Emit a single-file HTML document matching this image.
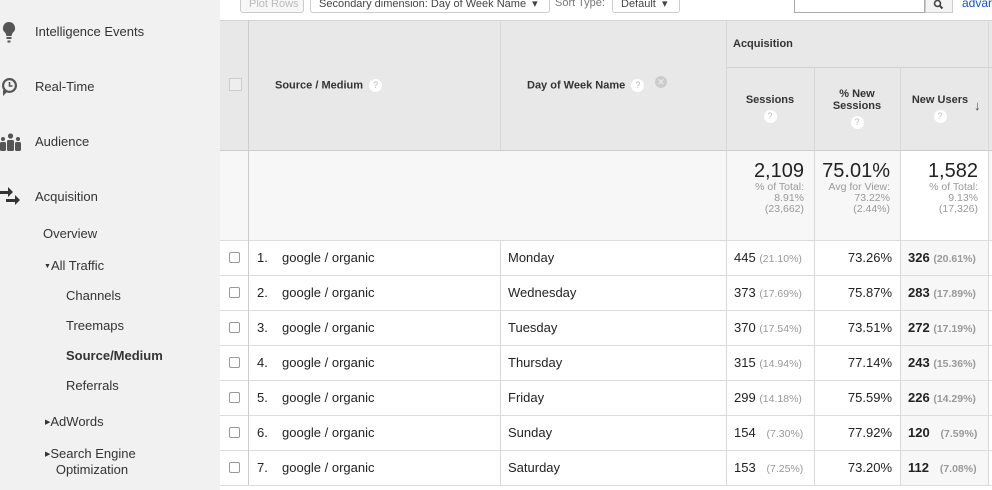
<!DOCTYPE html>
<html><head><style>
*{margin:0;padding:0;box-sizing:border-box}
body{width:992px;height:490px;overflow:hidden;background:#fff;font-family:"Liberation Sans",Arial,sans-serif;color:#222;position:relative}
.a{position:absolute}
.side{left:0;top:0;width:220px;height:490px;background:#f1f1f1}
.side div{position:absolute;font-size:13px;color:#333;white-space:nowrap}
.bt{border:1px solid #ccc;border-radius:3px;background:#f7f7f7;font-size:11px;color:#444;height:15px;top:-2px;padding:0 8px;line-height:10px;white-space:nowrap;overflow:hidden}
.vl{position:absolute;width:1px;background:#d8d8d8}
.hl{position:absolute;height:1px;background:#dcdcdc;left:220px;width:772px}
.t{position:absolute;font-size:13px;white-space:nowrap}
.cb{position:absolute;left:229px;width:11px;height:11px;border:1px solid #999;border-radius:2px;background:#fff}
.q{display:inline-block;width:13px;height:13px;border-radius:50%;background:#fff;color:#bbb;font-size:9px;text-align:center;line-height:13px;font-weight:normal;vertical-align:middle}
.th{position:absolute;font-size:11px;font-weight:bold;color:#333;text-align:center;white-space:nowrap}
.g{color:#999;font-size:10.5px}
.r{text-align:right}
</style></head><body>
<div class="a side">
 <svg class="a" style="left:2px;top:22px" width="14" height="22" viewBox="0 0 14 22"><path d="M7 0a6 6 0 0 0-4 10.5c1 1 1.3 2.5 1.3 3.5h5.4c0-1 .3-2.5 1.3-3.5A6 6 0 0 0 7 0z" fill="#555"/><rect x="4.5" y="15" width="5" height="2" fill="#555"/><rect x="5.5" y="18.5" width="3" height="2" fill="#555"/></svg>
 <svg class="a" style="left:0;top:77px" width="19" height="20" viewBox="0 0 19 20"><circle cx="9.5" cy="8.5" r="7.5" fill="#555"/><circle cx="9.5" cy="8.5" r="5.3" fill="#f1f1f1"/><path d="M9.5 5v4h3" stroke="#555" stroke-width="1.6" fill="none"/><path d="M3 13l0 6 4-4z" fill="#555"/></svg>
 <svg class="a" style="left:0;top:133px" width="21" height="18" viewBox="0 0 21 18"><circle cx="10.5" cy="3" r="2.6" fill="#555"/><circle cx="3" cy="6" r="2" fill="#555"/><circle cx="18" cy="6" r="2" fill="#555"/><rect x="7" y="7" width="7" height="11" rx="1.5" fill="#555"/><rect x="0" y="9" width="6" height="9" rx="1.5" fill="#555"/><rect x="15" y="9" width="6" height="9" rx="1.5" fill="#555"/></svg>
 <svg class="a" style="left:0;top:186px" width="21" height="22" viewBox="0 0 21 22"><path d="M0 5h8V1l5 5-5 5V8H0z" fill="#333"/><path d="M6 13h9v-4l5 5-5 5v-3H6z" fill="#333"/></svg>
 <div style="left:35px;top:24px">Intelligence Events</div>
 <div style="left:35px;top:79px">Real-Time</div>
 <div style="left:35px;top:134px">Audience</div>
 <div style="left:35px;top:189px">Acquisition</div>
 <div style="left:43px;top:226px">Overview</div>
 <div style="left:44px;top:258px"><span style="font-size:7px;vertical-align:2px">▼</span>All Traffic</div>
 <div style="left:66px;top:288px">Channels</div>
 <div style="left:66px;top:318px">Treemaps</div>
 <div style="left:66px;top:348px;font-weight:bold">Source/Medium</div>
 <div style="left:66px;top:378px">Referrals</div>
 <div style="left:45px;top:414px"><span style="font-size:7px;vertical-align:2px">▶</span>AdWords</div>
 <div style="left:45px;top:446px;line-height:15px"><span style="font-size:7px;vertical-align:2px">▶</span>Search Engine<br>&nbsp;&nbsp;&nbsp;Optimization</div>
</div>
<!-- toolbar -->
<div class="a bt" style="left:240px;width:64px;color:#bbb">Plot Rows</div>
<div class="a bt" style="left:310px;width:240px;background:#fff">Secondary dimension: Day of Week Name &nbsp;▾</div>
<div class="a" style="left:555px;top:-3px;font-size:11px;color:#777">Sort Type:</div>
<div class="a bt" style="left:612px;width:68px;background:#fff">Default &nbsp;▾</div>
<div class="a" style="left:794px;top:-2px;width:131px;height:15px;border:1px solid #aaa;background:#fff"></div>
<div class="a" style="left:925px;top:-2px;width:28px;height:15px;border:1px solid #ccc;background:#f3f3f3"></div>
<svg class="a" style="left:933px;top:0" width="12" height="10" viewBox="0 0 12 10"><circle cx="4.5" cy="3.5" r="3" stroke="#444" stroke-width="1.6" fill="none"/><path d="M6.5 5.5l3 3" stroke="#444" stroke-width="2"/></svg>
<div class="a" style="left:962px;top:-4px;font-size:12px;color:#15c">advar</div>
<!-- header bg -->
<div class="a" style="left:220px;top:20px;width:772px;height:130px;background:#e8e8e8;border-top:1px solid #d4d4d4"></div>
<div class="a" style="left:220px;top:150px;width:772px;height:90px;background:#f7f7f7"></div>
<div class="a" style="left:900px;top:150px;width:88px;height:90px;background:#fff"></div>
<div class="a" style="left:900px;top:240px;width:88px;height:245px;background:#f7f7f7"></div>
<!-- lines -->
<div class="hl" style="top:150px;background:#ccc"></div>
<div class="hl" style="top:240px"></div>
<div class="hl" style="top:275px"></div><div class="hl" style="top:310px"></div><div class="hl" style="top:345px"></div><div class="hl" style="top:380px"></div><div class="hl" style="top:415px"></div><div class="hl" style="top:450px"></div><div class="hl" style="top:485px"></div>
<div class="a" style="left:726px;top:67px;width:266px;height:1px;background:#d0d0d0"></div>
<div class="vl" style="left:248px;top:20px;height:465px;background:#ccc"></div>
<div class="vl" style="left:500px;top:20px;height:130px"></div>
<div class="vl" style="left:500px;top:240px;height:245px"></div>
<div class="vl" style="left:726px;top:20px;height:465px"></div>
<div class="vl" style="left:814px;top:67px;height:418px"></div>
<div class="vl" style="left:900px;top:67px;height:418px"></div>
<div class="vl" style="left:988px;top:20px;height:465px"></div>
<!-- header text -->
<div class="a" style="left:229px;top:78px;width:13px;height:13px;border:1px solid #ccc;background:#eee"></div>
<div class="th" style="left:275px;top:79px">Source / Medium &nbsp;<span class="q">?</span></div>
<div class="th" style="left:527px;top:79px">Day of Week Name &nbsp;<span class="q">?</span></div>
<div class="a" style="left:655px;top:76px;width:12px;height:12px;border-radius:50%;background:#ccc;color:#e8e8e8;font-size:9px;line-height:12px;text-align:center;font-weight:bold">✕</div>
<div class="th" style="left:733px;top:38px">Acquisition</div>
<div class="th" style="left:726px;top:94px;width:88px">Sessions<br><span class="q" style="margin-top:4px">?</span></div>
<div class="th" style="left:814px;top:88px;width:86px;line-height:12px">% New<br>Sessions<br><span class="q" style="margin-top:4px">?</span></div>
<div class="th" style="left:900px;top:94px;width:80px">New Users<br><span class="q" style="margin-top:4px">?</span></div>
<div class="a" style="left:974px;top:98px;font-size:13px;font-weight:bold;color:#444">↓</div>
<!-- totals -->
<div class="a r" style="left:726px;top:160px;width:78px;line-height:11px"><div style="font-size:20px;line-height:22px">2,109</div><div class="g">% of Total:<br>8.91%<br>(23,662)</div></div>
<div class="a r" style="left:814px;top:160px;width:76px;line-height:11px"><div style="font-size:20px;line-height:22px">75.01%</div><div class="g">Avg for View:<br>73.22%<br>(2.44%)</div></div>
<div class="a r" style="left:900px;top:160px;width:78px;line-height:11px"><div style="font-size:20px;line-height:22px">1,582</div><div class="g">% of Total:<br>9.13%<br>(17,326)</div></div>
<!-- rows -->
<div class="a" style="left:0;top:240px;width:992px">
<div style="position:relative;height:35px"><span class="cb" style="top:12px"></span><span class="t" style="left:257px;top:10px">1.</span><span class="t" style="left:282px;top:10px">google / organic</span><span class="t" style="left:508px;top:10px">Monday</span><span class="t" style="left:734px;top:10px">445 <span class="g">(21.10%)</span></span><span class="t r" style="left:814px;width:78px;top:10px">73.26%</span><span class="t" style="left:908px;top:10px"><b>326</b> <span class="g" style="font-weight:bold">(20.61%)</span></span></div>
<div style="position:relative;height:35px"><span class="cb" style="top:12px"></span><span class="t" style="left:257px;top:10px">2.</span><span class="t" style="left:282px;top:10px">google / organic</span><span class="t" style="left:508px;top:10px">Wednesday</span><span class="t" style="left:734px;top:10px">373 <span class="g">(17.69%)</span></span><span class="t r" style="left:814px;width:78px;top:10px">75.87%</span><span class="t" style="left:908px;top:10px"><b>283</b> <span class="g" style="font-weight:bold">(17.89%)</span></span></div>
<div style="position:relative;height:35px"><span class="cb" style="top:12px"></span><span class="t" style="left:257px;top:10px">3.</span><span class="t" style="left:282px;top:10px">google / organic</span><span class="t" style="left:508px;top:10px">Tuesday</span><span class="t" style="left:734px;top:10px">370 <span class="g">(17.54%)</span></span><span class="t r" style="left:814px;width:78px;top:10px">73.51%</span><span class="t" style="left:908px;top:10px"><b>272</b> <span class="g" style="font-weight:bold">(17.19%)</span></span></div>
<div style="position:relative;height:35px"><span class="cb" style="top:12px"></span><span class="t" style="left:257px;top:10px">4.</span><span class="t" style="left:282px;top:10px">google / organic</span><span class="t" style="left:508px;top:10px">Thursday</span><span class="t" style="left:734px;top:10px">315 <span class="g">(14.94%)</span></span><span class="t r" style="left:814px;width:78px;top:10px">77.14%</span><span class="t" style="left:908px;top:10px"><b>243</b> <span class="g" style="font-weight:bold">(15.36%)</span></span></div>
<div style="position:relative;height:35px"><span class="cb" style="top:12px"></span><span class="t" style="left:257px;top:10px">5.</span><span class="t" style="left:282px;top:10px">google / organic</span><span class="t" style="left:508px;top:10px">Friday</span><span class="t" style="left:734px;top:10px">299 <span class="g">(14.18%)</span></span><span class="t r" style="left:814px;width:78px;top:10px">75.59%</span><span class="t" style="left:908px;top:10px"><b>226</b> <span class="g" style="font-weight:bold">(14.29%)</span></span></div>
<div style="position:relative;height:35px"><span class="cb" style="top:12px"></span><span class="t" style="left:257px;top:10px">6.</span><span class="t" style="left:282px;top:10px">google / organic</span><span class="t" style="left:508px;top:10px">Sunday</span><span class="t" style="left:734px;top:10px">154 &nbsp;&nbsp;<span class="g">(7.30%)</span></span><span class="t r" style="left:814px;width:78px;top:10px">77.92%</span><span class="t" style="left:908px;top:10px"><b>120</b> &nbsp;&nbsp;<span class="g" style="font-weight:bold">(7.59%)</span></span></div>
<div style="position:relative;height:35px"><span class="cb" style="top:12px"></span><span class="t" style="left:257px;top:10px">7.</span><span class="t" style="left:282px;top:10px">google / organic</span><span class="t" style="left:508px;top:10px">Saturday</span><span class="t" style="left:734px;top:10px">153 &nbsp;&nbsp;<span class="g">(7.25%)</span></span><span class="t r" style="left:814px;width:78px;top:10px">73.20%</span><span class="t" style="left:908px;top:10px"><b>112</b> &nbsp;&nbsp;<span class="g" style="font-weight:bold">(7.08%)</span></span></div>
</div>
</body></html>
